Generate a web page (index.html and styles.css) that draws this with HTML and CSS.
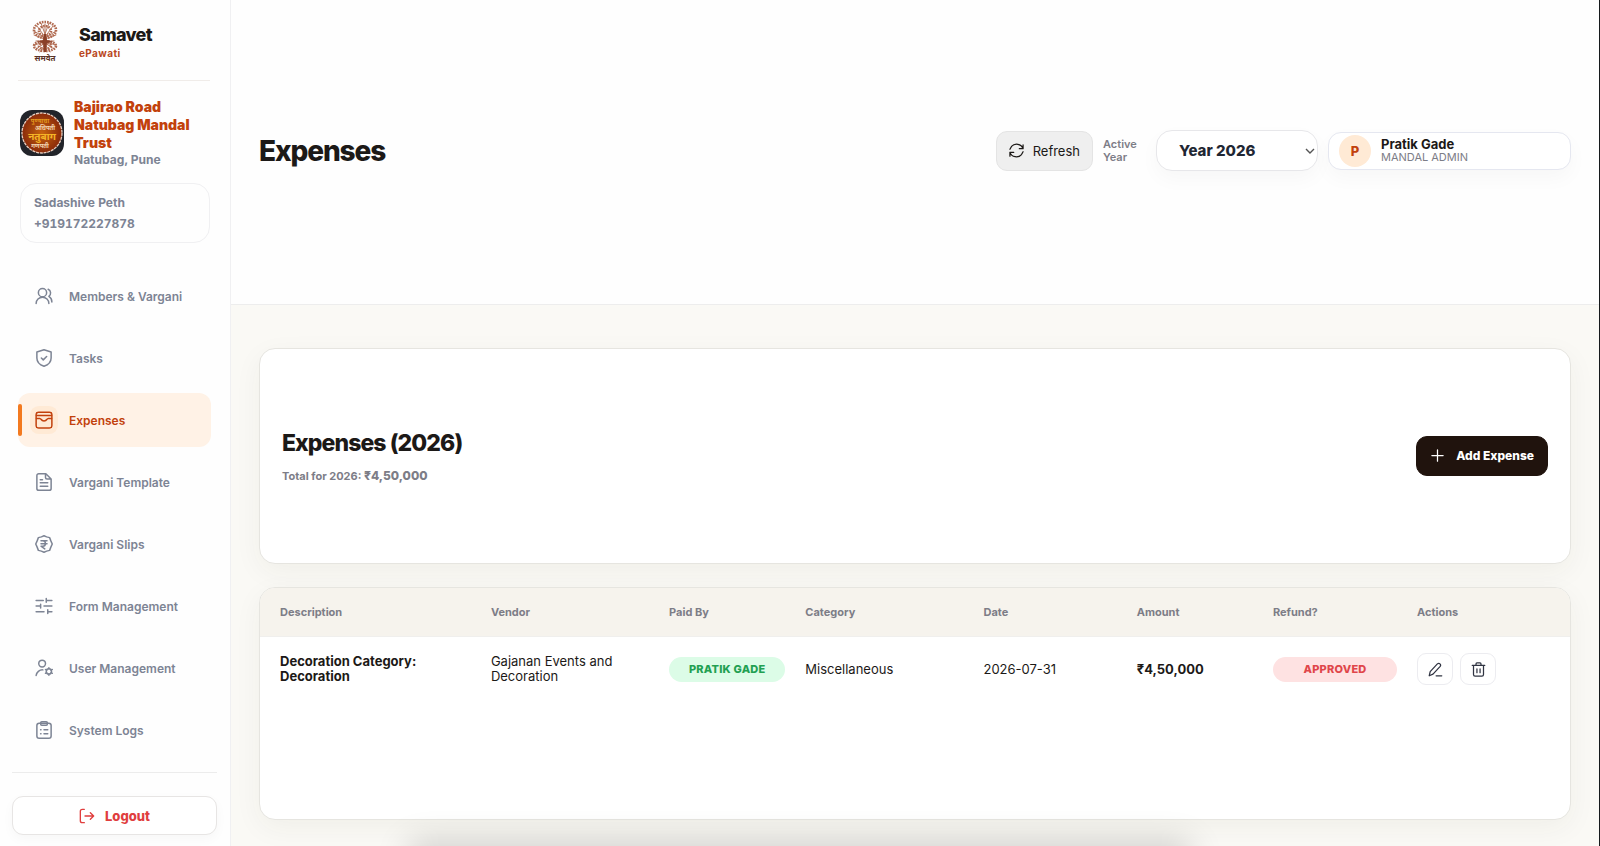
FILE: index.html
```html
<!DOCTYPE html>
<html lang="en">
<head>
    <meta charset="UTF-8">
    <meta name="viewport" content="width=device-width, initial-scale=1.0">
    <title>Samavet - Expenses</title>
    <link rel="stylesheet" href="styles.css">
</head>
<body>
    <aside class="sidebar">
        <div class="brand">
            <svg class="brand-logo" viewBox="0 0 36 44" aria-hidden="true">
                <g fill="none" stroke="#b87a62" stroke-width="1" stroke-linecap="round">
                    <path d="M18 20V4M18 17L10 6M18 17L26 6M18 18L7 11M18 18L29 11M18 19L7 15M18 19L29 15M18 14L14 3M18 14L22 3"/>
                    <path d="M18 21L9 21M18 21L27 21M18 22L7 25M18 22L29 25M18 23L9 29M18 23L27 29M18 24L13 32M18 24L23 32"/>
                </g>
                <g fill="none" stroke="#b0694f" stroke-width="2.6" stroke-dasharray="1.6 1">
                    <ellipse cx="18" cy="10" rx="11" ry="8"/>
                    <ellipse cx="18" cy="11" rx="6" ry="5"/>
                    <ellipse cx="18" cy="26" rx="11" ry="5"/>
                    <ellipse cx="18" cy="26" rx="6" ry="3"/>
                </g>
                <path d="M17 14h2l1 6 6 2-6 1-1 9h-2l-1-9-6-1 6-2z" fill="#8a4028"/>
                <text x="18" y="41" text-anchor="middle" class="brand-script">समवेत</text>
            </svg>
            <div>
                <div class="brand-name">Samavet</div>
                <div class="brand-tag">ePawati</div>
            </div>
        </div>

        <div class="mandal">
            <svg class="mandal-logo" viewBox="0 0 44 46" aria-hidden="true">
                <defs>
                    <radialGradient id="seal">
                        <stop offset="0" stop-color="#c8640f"/>
                        <stop offset="1" stop-color="#8a2a0a"/>
                    </radialGradient>
                </defs>
                <rect width="44" height="46" rx="12" fill="#22242a"/>
                <circle cx="22" cy="23" r="20" fill="url(#seal)" stroke="#e8cfc0" stroke-width="1.3" stroke-dasharray="3 .8"/>
                <text x="20" y="13" text-anchor="middle" class="seal-small seal-gold">पुण्याचा</text>
                <text x="25" y="20" text-anchor="middle" class="seal-small">अधिपती</text>
                <text x="22" y="30" text-anchor="middle" class="seal-big">नतुबाग</text>
                <text x="20" y="38" text-anchor="middle" class="seal-small">गणपती</text>
            </svg>
            <div>
                <div class="mandal-name">Bajirao Road Natubag Mandal Trust</div>
                <div class="mandal-place">Natubag, Pune</div>
            </div>
        </div>

        <div class="contact">
            <div>Sadashive Peth</div>
            <div>+919172227878</div>
        </div>

        <nav class="nav">
            <a href="#" class="nav-item">
                <svg class="icon" viewBox="0 0 24 24"><circle cx="10" cy="7.500" r="5.500"/><path d="M1.500 22a8.500 8.500 0 0 1 17 0M17.500 3a5.500 5.500 0 0 1 1 9.500c2.500 1.500 4 4 4 7.500"/></svg>
                Members &amp; Vargani
            </a>
            <a href="#" class="nav-item">
                <svg class="icon" viewBox="0 0 24 24"><path d="M12 1l9.500 3V12c0 5-3.500 9-9.500 11C6 21 2.500 17 2.500 12V4zM8.500 12l2.500 2.500 4.500-4.500"/></svg>
                Tasks
            </a>
            <a href="#" class="nav-item active">
                <svg class="icon" viewBox="0 0 24 24"><rect x="1.500" y="1.500" width="21" height="21" rx="3"/><path d="M2 6h20M2 10h4.500l1.500 1c2 3 6 3 8 0l1.500-1H22"/></svg>
                Expenses
            </a>
            <a href="#" class="nav-item">
                <svg class="icon" viewBox="0 0 24 24"><path d="M14.500 1H5a2.500 2.500 0 0 0-2.500 2.500v17A2.500 2.500 0 0 0 5 23h14a2.500 2.500 0 0 0 2.500-2.500V8zM14 1v5a2 2 0 0 0 2 2h5M7 9h3M7 13h10M7 17.500h10"/></svg>
                Vargani Template
            </a>
            <a href="#" class="nav-item">
                <svg class="icon" viewBox="0 0 24 24"><path d="M12 1l3.500 1.500 4 1L21 7.500l2 4.500-2 4.500-1.500 4-4 1L12 23l-3.500-1.500-4-1L3 16.500 1 12l2-4.500 1.500-4 4-1zM8 7.500h8M8 11.500h8M8 7.500h2.500c4.500 0 4.500 7.500 0 7.500H8l5 3.500"/></svg>
                Vargani Slips
            </a>
            <a href="#" class="nav-item">
                <svg class="icon" viewBox="0 0 24 24"><path d="M1.500 4.500H11M15 4.500h7.500M15 2v5M1.500 12H7M12 12h10.500M7.500 9.500v5M1.500 19.500H12M17 19.500h5.500M17 17v5"/></svg>
                Form Management
            </a>
            <a href="#" class="nav-item">
                <svg class="icon" viewBox="0 0 24 24"><circle cx="9.500" cy="6" r="4.500"/><path d="M1.500 22a8.500 8.500 0 0 1 9-7.500M18.500 11.500v1.500M18.500 20v1.500M14 14l1.500 1M21.500 18l1.500 1M14 19l1.500-1M21.500 15l1.500-1"/><circle cx="18.500" cy="16.500" r="3.500"/></svg>
                User Management
            </a>
            <a href="#" class="nav-item">
                <svg class="icon" viewBox="0 0 24 24"><rect x="2.500" y="3" width="19" height="20" rx="3"/><rect x="7.500" y="1" width="9" height="4.500" rx="1.500"/><path d="M7.500 11.500h.5M12 11.500h5M7.500 17h.5M12 17h5"/></svg>
                System Logs
            </a>
        </nav>

        <div class="sidebar-foot">
            <button class="logout" type="button">
                <svg class="icon" viewBox="0 0 24 24"><path d="M8 2H5a3 3 0 0 0-3 3v14a3 3 0 0 0 3 3h3M9 12h13M17 7l5 5-5 5"/></svg>
                Logout
            </button>
        </div>
    </aside>

    <main class="main">
        <header class="topbar">
            <h1>Expenses</h1>
            <div class="tools">
                <button class="refresh" type="button">
                    <svg class="icon" viewBox="0 0 24 24"><path d="M22.500 9A11 11 0 0 0 4 5.500L1.500 10M22.500 3v6h-6M1.500 15A11 11 0 0 0 20 18.500l2.500-4.500M1.500 21v-6h6"/></svg>
                    Refresh
                </button>
                <label class="year-label" for="year">Active Year</label>
                <div class="year-box">
                    <select id="year" class="year">
                        <option>Year 2026</option>
                    </select>
                    <svg class="chevron" viewBox="0 0 10 10"><path d="M1 3l4 4 4-4"/></svg>
                </div>
                <div class="user">
                    <span class="avatar">P</span>
                    <div>
                        <div class="user-name">Pratik Gade</div>
                        <div class="user-role">MANDAL ADMIN</div>
                    </div>
                </div>
            </div>
        </header>

        <div class="content">
            <section class="card summary">
                <div>
                    <h2>Expenses (2026)</h2>
                    <p class="total">Total for 2026: <strong>₹4,50,000</strong></p>
                </div>
                <button class="add" type="button">
                    <svg class="icon" viewBox="0 0 24 24"><path d="M12 3v18M3 12h18"/></svg>
                    Add Expense
                </button>
            </section>

            <section class="card list">
                <table>
                    <thead>
                        <tr>
                            <th class="col-wide">Description</th>
                            <th class="col-mid">Vendor</th>
                            <th class="col-small">Paid By</th>
                            <th class="col-mid">Category</th>
                            <th class="col-date">Date</th>
                            <th class="col-small">Amount</th>
                            <th class="col-refund">Refund?</th>
                            <th>Actions</th>
                        </tr>
                    </thead>
                    <tbody>
                        <tr>
                            <td class="strong">Decoration Category: Decoration</td>
                            <td>Gajanan Events and Decoration</td>
                            <td><span class="pill green">PRATIK GADE</span></td>
                            <td>Miscellaneous</td>
                            <td>2026-07-31</td>
                            <td class="strong">₹4,50,000</td>
                            <td><span class="pill red">APPROVED</span></td>
                            <td>
                                <div class="actions">
                                    <button type="button" aria-label="Edit">
                                        <svg class="icon" viewBox="0 0 24 24"><path d="M2 22l1.500-6.500L15 3c3-2.500 6.500 1 4.500 4L8 19.500zM13 22h9"/></svg>
                                    </button>
                                    <button type="button" aria-label="Delete">
                                        <svg class="icon" viewBox="0 0 24 24"><path d="M2 5.500h20M8 5V3a1.500 1.500 0 0 1 1.500-1.500h5A1.500 1.500 0 0 1 16 3v2M4 6v14a2.500 2.500 0 0 0 2.500 2.500h11A2.500 2.500 0 0 0 20 20V6M9.500 11v6M14.500 11v6"/></svg>
                                    </button>
                                </div>
                            </td>
                        </tr>
                    </tbody>
                </table>
            </section>
        </div>
    </main>
    <div class="bottom-shade"></div>
</body>
</html>
```

FILE: styles.css
```css
* {
    box-sizing: border-box;
}
body {
    margin: 0;
    display: flex;
    min-height: 100vh;
    background: #faf9f5;
    font-family: Inter, "Noto Sans", sans-serif;
    font-size: 13px;
    color: #1c1917;
    border-right: 1px solid #15191c;
    overflow: hidden;
}
button, select {
    font: inherit;
    color: inherit;
    cursor: pointer;
}
h1, h2, p {
    margin: 0;
}
.icon {
    width: 18px;
    height: 18px;
    flex: none;
    fill: none;
    stroke: currentColor;
    stroke-width: 2;
    stroke-linecap: round;
    stroke-linejoin: round;
}

/* sidebar */
.sidebar {
    width: 231px;
    flex: none;
    display: flex;
    flex-direction: column;
    background: #fefefe;
    border-right: 1px solid #f0f0f2;
}
.brand {
    display: flex;
    align-items: center;
    gap: 16px;
    margin: 0 20px 0 18px;
    padding: 20px 0 16px 9px;
    border-bottom: 1px solid #f0ece9;
}
.brand-logo {
    width: 36px;
    height: 44px;
}
.brand-script {
    font-size: 8px;
    font-weight: 700;
    fill: #5b3226;
}
.brand-name {
    font-size: 18px;
    line-height: 22px;
    font-weight: 800;
    letter-spacing: -0.04em;
}
.brand-tag {
    font-size: 10px;
    line-height: 14px;
    font-weight: 700;
    letter-spacing: 0.04em;
    color: #b9481f;
}
.mandal {
    display: flex;
    align-items: center;
    gap: 10px;
    margin: 17px 20px 15px;
}
.mandal-logo {
    width: 44px;
    height: 46px;
    flex: none;
}
.seal-small {
    font-size: 6px;
    font-weight: 700;
    fill: #f3d3b0;
}
.seal-gold {
    fill: #e39a1f;
}
.seal-big {
    font-size: 10px;
    font-weight: 700;
    fill: #f5b526;
}
.mandal-name {
    font-size: 14px;
    line-height: 18px;
    font-weight: 900;
    color: #c2410c;
}
.mandal-place {
    font-size: 12px;
    line-height: 16px;
    font-weight: 700;
    color: #7d8494;
}
.contact {
    margin: 0 20px;
    padding: 8px 13px;
    border: 1px solid #f0f0f2;
    border-radius: 16px;
    font-size: 12px;
    line-height: 21px;
    font-weight: 700;
    font-variant-numeric: tabular-nums;
    color: #7d8494;
}
.nav {
    display: flex;
    flex-direction: column;
    gap: 8px;
    margin: 26px 19px 0 18px;
}
.nav-item {
    display: flex;
    align-items: center;
    gap: 16px;
    height: 54px;
    padding-left: 17px;
    border-radius: 12px;
    font-size: 12px;
    font-weight: 600;
    color: #7d8494;
    text-decoration: none;
}
.nav-item.active {
    position: relative;
    background: #fff2e6;
    color: #c2410c;
}
.nav-item.active::before {
    content: '';
    position: absolute;
    left: 0;
    top: 11px;
    bottom: 11px;
    width: 4px;
    border-radius: 2px;
    background: #f37a20;
}
.nav-item.active .icon {
    background: #ffead5;
    box-shadow: 0 0 0 5px #ffead5;
    border-radius: 4px;
}
.sidebar-foot {
    margin: auto 13px 11px 12px;
    padding-top: 23px;
    border-top: 1px solid #ececec;
}
.logout {
    display: flex;
    align-items: center;
    justify-content: center;
    gap: 10px;
    width: 100%;
    height: 39px;
    background: #fff;
    border: 1px solid #e7e5e4;
    border-radius: 11px;
    box-shadow: 0 4px 12px rgba(0, 0, 0, 0.03);
    font-weight: 800;
    color: #e03e3e;
}
.logout .icon {
    width: 16px;
    height: 16px;
}

/* header */
.main {
    flex: 1;
    min-width: 0;
    display: flex;
    flex-direction: column;
}
.topbar {
    display: flex;
    align-items: center;
    justify-content: space-between;
    height: 36vh;
    padding: 0 28px 2px;
    background: #fefefe;
    border-bottom: 1px solid #ededed;
}
h1 {
    font-size: 28px;
    font-weight: 800;
    letter-spacing: -0.04em;
}
.tools {
    display: flex;
    align-items: center;
    gap: 10px;
}
.refresh {
    display: flex;
    align-items: center;
    gap: 9px;
    height: 40px;
    padding: 0 12px;
    background: #efefef;
    border: 1px solid #e4e4e4;
    border-radius: 11px;
}
.refresh .icon {
    width: 15px;
    height: 15px;
}
.year-label {
    width: 43px;
    font-size: 11px;
    line-height: 13px;
    font-weight: 600;
    color: #7d7d87;
}
.year-box {
    position: relative;
}
.year {
    appearance: none;
    width: 162px;
    height: 41px;
    padding: 0 22px;
    background: #fff;
    border: 1px solid #e7e7ea;
    border-radius: 16px;
    box-shadow: 0 8px 20px rgba(0, 0, 0, 0.03);
    font-size: 15px;
    font-weight: 800;
    color: #1f2733;
}
.chevron {
    position: absolute;
    right: 3px;
    top: 16px;
    width: 10px;
    height: 10px;
    fill: none;
    stroke: #555;
    stroke-width: 1.4;
    pointer-events: none;
}
.user {
    display: flex;
    align-items: center;
    gap: 10px;
    width: 243px;
    height: 38px;
    padding-left: 10px;
    background: #fff;
    border: 1px solid #e5e7f0;
    border-radius: 13px;
    box-shadow: 0 8px 20px rgba(0, 0, 0, 0.03);
}
.avatar {
    display: grid;
    place-items: center;
    width: 32px;
    height: 32px;
    border-radius: 50%;
    background: #ffead5;
    font-weight: 800;
    color: #c2410c;
}
.user-name {
    line-height: 14px;
    font-weight: 700;
}
.user-role {
    font-size: 11px;
    line-height: 13px;
    color: #7d7d87;
}

/* content */
.content {
    flex: 1;
    display: grid;
    grid-template-rows: 27fr 29fr;
    gap: 23px;
    padding: 43px 28px 26px;
}
.card {
    background: #fff;
    border: 1px solid #e6e5e0;
    border-radius: 16px;
    box-shadow: 0 8px 28px rgba(60, 50, 20, 0.05);
}
.summary {
    display: flex;
    align-items: center;
    justify-content: space-between;
    padding: 0 22px;
}
h2 {
    font-size: 23px;
    line-height: 28px;
    font-weight: 800;
    letter-spacing: -0.04em;
}
.total {
    margin-top: 12px;
    font-size: 11px;
    line-height: 14px;
    font-weight: 700;
    color: #7d7d87;
}
.total strong {
    font-size: 12px;
    font-weight: 800;
}
.add {
    display: flex;
    align-items: center;
    gap: 11px;
    height: 40px;
    padding: 0 13px;
    background: #20130d;
    border: 1px solid #20130d;
    border-radius: 11px;
    font-size: 12px;
    font-weight: 800;
    color: #fff;
}
.add .icon {
    width: 15px;
    height: 15px;
}
.list {
    overflow: hidden;
}
table {
    width: 100%;
    border-collapse: collapse;
    table-layout: fixed;
}
th {
    height: 48px;
    padding: 0 0 0 20px;
    background: #f6f3ed;
    border-bottom: 1px solid #f0efed;
    font-size: 11px;
    font-weight: 700;
    color: #7d7d87;
    text-align: left;
}
td {
    height: 66px;
    padding: 0 0 0 20px;
    line-height: 15px;
}
.col-wide {
    width: 16.1%;
}
.col-mid {
    width: 13.6%;
}
.col-small {
    width: 10.4%;
}
.col-date {
    width: 11.7%;
}
.col-refund {
    width: 11%;
}
.strong {
    font-weight: 700;
}
.pill {
    display: block;
    border-radius: 13px;
    line-height: 25px;
    font-size: 11px;
    font-weight: 800;
    letter-spacing: 0.02em;
    text-align: center;
}
.green {
    background: #dcfce7;
    color: #22a052;
}
.red {
    background: #fee2e2;
    color: #e0464a;
}
.actions {
    display: flex;
    gap: 7px;
}
.actions button {
    display: grid;
    place-items: center;
    width: 36px;
    height: 32px;
    padding: 0;
    background: #fff;
    border: 1px solid #ececf0;
    border-radius: 9px;
    color: #303442;
}
.actions .icon {
    width: 15px;
    height: 15px;
}

/* soft shade rising from the bottom edge */
.bottom-shade {
    position: fixed;
    left: 26%;
    right: 26%;
    bottom: -24px;
    height: 20px;
    box-shadow: 0 0 34px 6px rgba(0, 0, 0, 0.2);
    pointer-events: none;
}
```
